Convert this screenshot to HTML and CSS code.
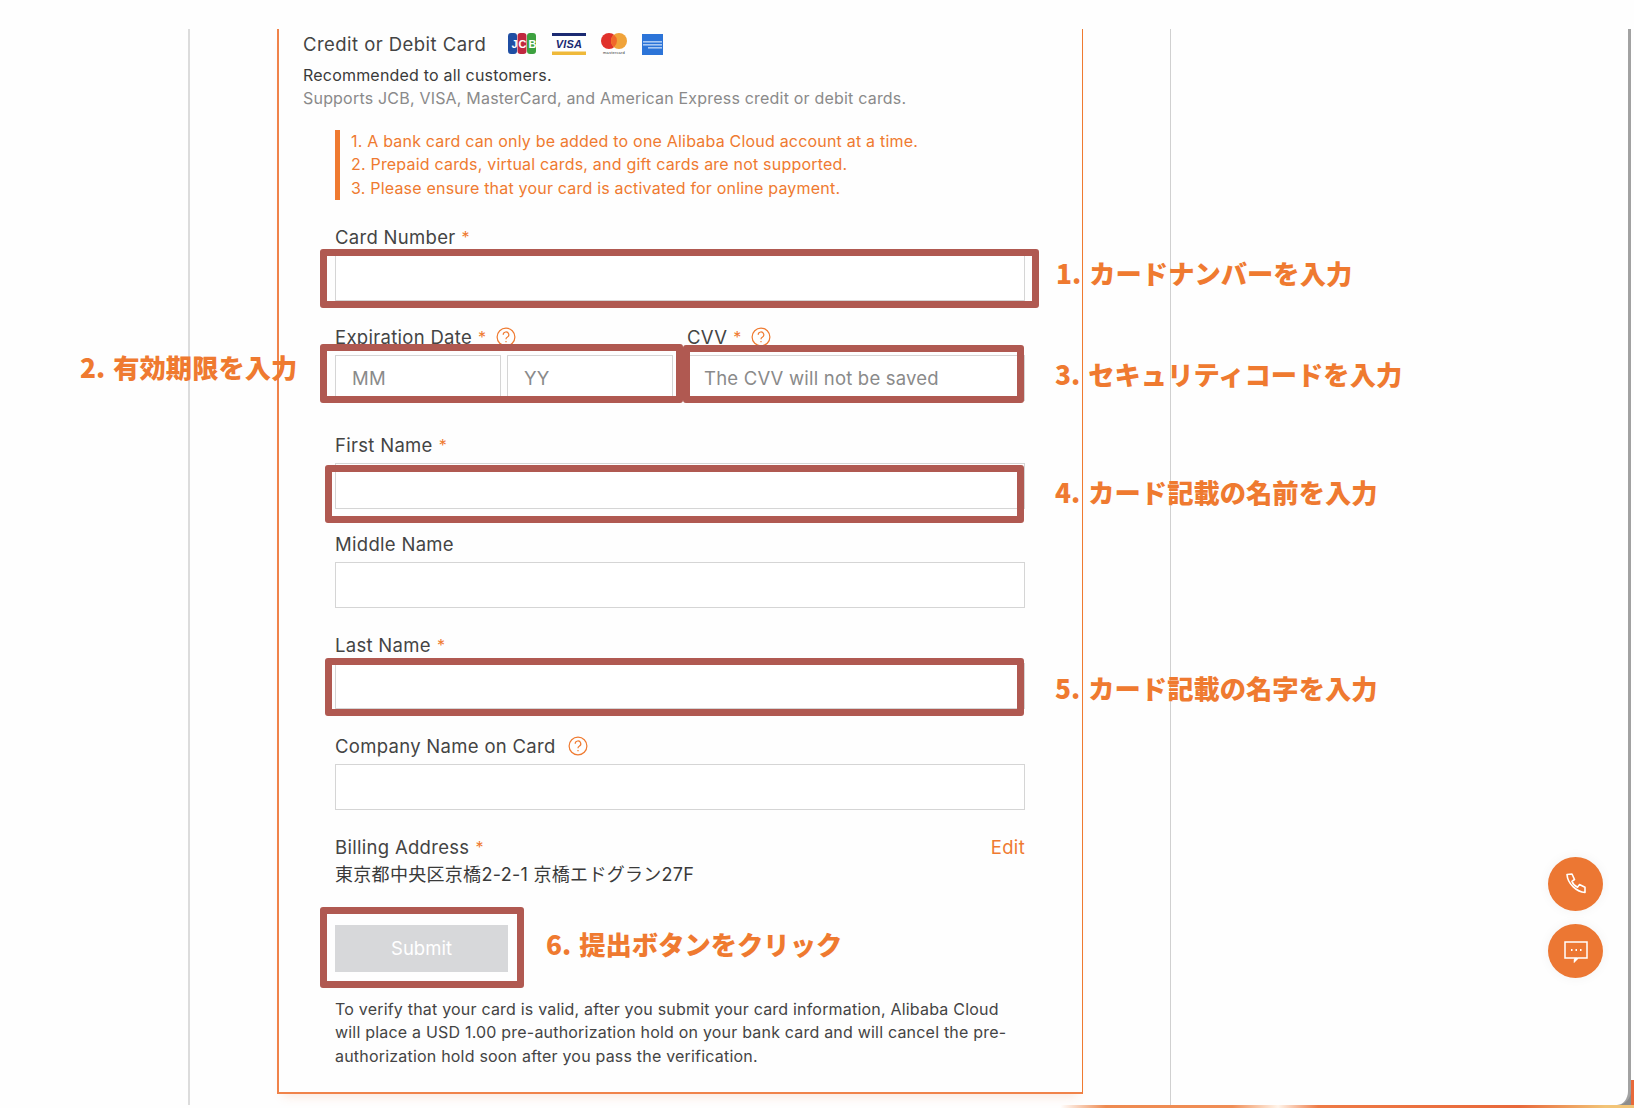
FILE: index.html
```html
<!DOCTYPE html>
<html lang="en">
<head>
<meta charset="utf-8">
<title>Credit or Debit Card</title>
<link rel="stylesheet" href="styles.css">
</head>
<body>
<div class="page">
  <main class="column">
    <section class="card">
      <div class="heading-row">
        <span class="heading">Credit or Debit Card</span>
        <span class="brands">
          <svg class="brand brand-jcb" width="28" height="22" viewBox="0 0 28 22">
            <rect x="0" y="0" width="9" height="21" rx="3" fill="#1f4ea3"/>
            <rect x="9.500" y="0" width="9" height="21" rx="3" fill="#c0283f"/>
            <rect x="19" y="0" width="9" height="21" rx="3" fill="#3da13f"/>
            <text x="3.500" y="15" class="jcb">J</text>
            <text x="10.500" y="15" class="jcb">C</text>
            <text x="20.500" y="15" class="jcb">B</text>
          </svg>
          <svg class="brand" width="34" height="22" viewBox="0 0 34 22">
            <rect width="34" height="3" fill="#1b2a72"/>
            <rect y="18.500" width="34" height="3.500" fill="#efb93a"/>
            <text x="17" y="15" text-anchor="middle" class="visa">VISA</text>
          </svg>
          <svg class="brand" width="26" height="22" viewBox="0 0 26 22">
            <circle cx="8" cy="8" r="8" fill="#e0312b"/>
            <circle cx="18" cy="8" r="8" fill="#f0a33a"/>
            <path d="M13 1.800a8 8 0 0 1 0 12.400a8 8 0 0 1 0-12.400z" fill="#f0672b"/>
            <text x="13" y="21" text-anchor="middle" class="mc">mastercard</text>
          </svg>
          <svg class="brand" width="21" height="21" viewBox="0 0 21 21">
            <rect width="21" height="21" fill="#2c74d8"/>
            <rect x="1" y="7" width="19" height="1.600" fill="#a9c8f2"/>
            <rect x="1" y="10" width="19" height="1.600" fill="#a9c8f2"/>
            <rect x="6" y="13" width="14" height="1.600" fill="#a9c8f2"/>
          </svg>
        </span>
      </div>
      <p class="lead">Recommended to all customers.</p>
      <p class="muted">Supports JCB, VISA, MasterCard, and American Express credit or debit cards.</p>
      <ol class="notice">
        <li>1. A bank card can only be added to one Alibaba Cloud account at a time.</li>
        <li>2. Prepaid cards, virtual cards, and gift cards are not supported.</li>
        <li>3. Please ensure that your card is activated for online payment.</li>
      </ol>
      <form class="form">
        <div class="field">
          <label class="label"><span>Card Number</span><span class="req">*</span></label>
          <div class="input"></div>
        </div>
        <div class="split">
          <div class="field">
            <label class="label"><span>Expiration Date</span><span class="req">*</span><svg class="help" width="20" height="20" viewBox="0 0 18 18"><circle cx="9" cy="9" r="8"/><path d="M6.500 7a2.500 2.500 0 1 1 3.600 2.200c-.8.4-1.100.9-1.100 1.800"/><path d="M9 12.600v1.200"/></svg></label>
            <div class="pair">
              <div class="input"><span class="ph">MM</span></div>
              <div class="input"><span class="ph">YY</span></div>
            </div>
          </div>
          <div class="field">
            <label class="label"><span>CVV</span><span class="req">*</span><svg class="help" width="20" height="20" viewBox="0 0 18 18"><circle cx="9" cy="9" r="8"/><path d="M6.500 7a2.500 2.500 0 1 1 3.600 2.200c-.8.4-1.100.9-1.100 1.800"/><path d="M9 12.600v1.200"/></svg></label>
            <div class="input"><span class="ph">The CVV will not be saved</span></div>
          </div>
        </div>
        <div class="field field-tight">
          <label class="label"><span>First Name</span><span class="req">*</span></label>
          <div class="input"></div>
        </div>
        <div class="field">
          <label class="label"><span>Middle Name</span></label>
          <div class="input"></div>
        </div>
        <div class="field">
          <label class="label"><span>Last Name</span><span class="req">*</span></label>
          <div class="input"></div>
        </div>
        <div class="field">
          <label class="label"><span>Company Name on Card</span><svg class="help" width="20" height="20" viewBox="0 0 18 18"><circle cx="9" cy="9" r="8"/><path d="M6.500 7a2.500 2.500 0 1 1 3.600 2.200c-.8.4-1.100.9-1.100 1.800"/><path d="M9 12.600v1.200"/></svg></label>
          <div class="input"></div>
        </div>
        <div class="billing">
          <div class="billing-row">
            <span class="label"><span>Billing Address</span><span class="req">*</span></span>
            <a class="edit">Edit</a>
          </div>
          <div class="address">東京都中央区京橋2-2-1 京橋エドグラン27F</div>
        </div>
        <button type="button" class="submit">Submit</button>
        <p class="foot">To verify that your card is valid, after you submit your card information, Alibaba Cloud will place a USD 1.00 pre-authorization hold on your bank card and will cancel the pre-authorization hold soon after you pass the verification.</p>
      </form>
    </section>
  </main>

  <div class="mark mark-1"></div>
  <div class="mark mark-2"></div>
  <div class="mark mark-3"></div>
  <div class="mark mark-4"></div>
  <div class="mark mark-5"></div>
  <div class="mark mark-6"></div>

  <div class="note note-1">1. カードナンバーを入力</div>
  <div class="note note-2">2. 有効期限を入力</div>
  <div class="note note-3">3. セキュリティコードを入力</div>
  <div class="note note-4">4. カード記載の名前を入力</div>
  <div class="note note-5">5. カード記載の名字を入力</div>
  <div class="note note-6">6. 提出ボタンをクリック</div>

  <div class="fabs">
    <div class="fab">
      <svg width="24" height="24" viewBox="0 0 24 24" fill="none" stroke="#fff" stroke-width="1.600" stroke-linejoin="round"><path d="M3 2.500l5-.5 2.500 5.500-2.600 1.800c.9 2.600 3 4.800 5.600 5.900l1.900-2.600 5.600 2.600v5.300C13 20 3.600 12 3 2.500z"/></svg>
    </div>
    <div class="fab">
      <svg width="26" height="24" viewBox="0 0 26 24" fill="none" stroke="#fff" stroke-width="1.500"><path d="M2 3h22v16h-9l-3.500 3.500v-1.500l1.500-2H2z"/><path d="M8 11h1.500M12.500 11H14M17 11h1.500" stroke-width="2"/></svg>
    </div>
  </div>

  <div class="strip"></div>
  <div class="edge-orange"></div>
  <div class="corner"></div>
  <div class="rim"></div>
</div>
</body>
</html>
```

FILE: styles.css
```css
* { box-sizing: border-box; }
html, body { margin: 0; padding: 0; }
body {
  background: #fff;
  font-family: Inter, "Noto Sans CJK JP", sans-serif;
  color: #333;
  font-size: 16px;
  letter-spacing: .2px;
}
.page {
  position: relative;
  width: 1634px;
  height: 1108px;
  overflow: hidden;
  background: #fefefe;
  padding-top: 29px;
}
.column {
  margin-left: 188px;
  width: 983px;
  height: 1076px;
  padding-left: 87px;
  border-left: 2px solid #dcdcdc;
  border-right: 1px solid #d0d0d0;
}
.card {
  width: 806px;
  height: 1065px;
  padding: 0 57px 0 24px;
  border-left: 2px solid #f0834a;
  border-right: 1px solid #ef7a30;
  border-bottom: 2px solid #f0834a;
  box-shadow: 0 8px 10px -6px rgba(240, 131, 74, .2);
}
.heading-row {
  display: flex;
  align-items: center;
  height: 30px;
}
.heading { font-size: 18.5px; letter-spacing: .45px; width: 205px; color: #444; white-space: nowrap; }
.brands { display: flex; align-items: center; gap: 15px; }
.brand { display: block; }
.brand-jcb { margin-right: 1px; }
.jcb { font: 700 11px "Liberation Sans", sans-serif; fill: #fff; }
.visa { font: italic 700 11px "Liberation Sans", sans-serif; fill: #1b2a72; }
.mc { font: 4px "Liberation Sans", sans-serif; fill: #333; }
.lead, .muted { margin: 0; font-size: 16px; line-height: 23px; }
.lead { color: #3a3a3a; margin-top: 5px; }
.muted { color: #8a8a8a; white-space: nowrap; }
.notice {
  list-style: none;
  margin: 20px 0 0 32px;
  padding: 0 0 0 11px;
  border-left: 5px solid #ef7a30;
  color: #ef7a30;
  font-size: 16px;
  line-height: 23.3px;
}
.form {
  display: flex;
  flex-direction: column;
  gap: 28px;
  margin: 28px 0 0 32px;
  width: 690px;
}
.field { display: flex; flex-direction: column; }
.field-tight { margin-bottom: -2.500px; }
.label {
  display: flex;
  align-items: center;
  gap: 6px;
  height: 18px;
  font-size: 18.5px;
  letter-spacing: .3px;
  color: #444;
  white-space: nowrap;
}
.req { color: #ef7a30; font-size: 16px; }
.help { fill: none; stroke: #ef7a30; stroke-width: 1.100; margin-left: 6px; flex: none; }
.req + .help { margin-left: 3.500px; }
.input {
  height: 46px;
  margin-top: 9px;
  background: #fff;
  border: 1px solid #d5d5d5;
  display: flex;
  align-items: center;
  padding-left: 16px;
}
.ph { color: #8a8a8a; font-size: 18.5px; letter-spacing: .2px; }
.split {
  display: grid;
  grid-template-columns: 338px 338px;
  gap: 14px;
  margin-bottom: 7px;
  margin-top: -.6px;
}
.pair { display: grid; grid-template-columns: 166px 166px; gap: 6px; }
.billing { margin-top: -1.400px; }
.billing-row { display: flex; justify-content: space-between; align-items: center; }
.edit { color: #ef7a30; font-size: 18.5px; letter-spacing: .3px; }
.address { font-size: 18px; letter-spacing: .3px; line-height: 24px; margin-top: 5px; color: #3a3a3a; }
.submit {
  display: block;
  width: 173px;
  height: 47px;
  margin-top: 9.300px;
  border: 0;
  background: #d7d8da;
  color: #fff;
  font: inherit;
  font-size: 18.5px;
}
.foot { margin: -1.700px 0 0; font-size: 16px; line-height: 23.3px; color: #444; }

.mark {
  position: absolute;
  border: 7px solid #b05951;
  border-radius: 3px;
}
.mark-1 { left: 320px; top: 249px; width: 719px; height: 59px; }
.mark-2 { left: 320px; top: 344px; width: 363px; height: 59px; }
.mark-3 { left: 683px; top: 345px; width: 341px; height: 58px; }
.mark-4 { left: 325px; top: 465px; width: 699px; height: 58px; }
.mark-5 { left: 325px; top: 658px; width: 699px; height: 58px; }
.mark-6 { left: 320px; top: 907px; width: 204px; height: 81px; }

.note {
  position: absolute;
  font: 900 26.3px/36px "Noto Sans CJK JP", sans-serif;
  letter-spacing: 0;
  word-spacing: 2px;
  color: #ef7a30;
  white-space: nowrap;
}
.note-1 { left: 1056px; top: 255px; }
.note-2 { left: 80px; top: 349px; }
.note-3 { left: 1055px; top: 356px; }
.note-4 { left: 1055px; top: 474px; }
.note-5 { left: 1055px; top: 670px; }
.note-6 { left: 546px; top: 926px; }

.fabs {
  position: absolute;
  right: 31px;
  top: 857px;
  display: flex;
  flex-direction: column;
  gap: 13px;
}
.fab {
  width: 55px;
  height: 54px;
  border-radius: 50%;
  background: #ec7733;
  display: flex;
  align-items: center;
  justify-content: center;
  box-shadow: 0 0 12px rgba(0, 0, 0, .05);
}
.strip {
  position: absolute;
  left: 1060px;
  right: 0;
  bottom: 0;
  height: 3px;
  background: linear-gradient(90deg, #fff 0, #ee8a50 8%, #f08d55 30%, #fff4ea 38%, #ee7a45 45%, #e8683a 80%, #f2c477 95%);
}
.edge-orange {
  position: absolute;
  top: 1080px;
  right: 0;
  bottom: 3px;
  width: 3px;
  background: #e8693a;
}
.corner {
  position: absolute;
  right: 3px;
  bottom: 3px;
  width: 14px;
  height: 14px;
  background: #8c8c8c;
}
.rim {
  position: absolute;
  top: 29px;
  right: 3px;
  bottom: 3px;
  width: 22px;
  background: #fefefe;
  border-right: 3px solid #a2a2a2;
  border-bottom-right-radius: 14px;
}
```
